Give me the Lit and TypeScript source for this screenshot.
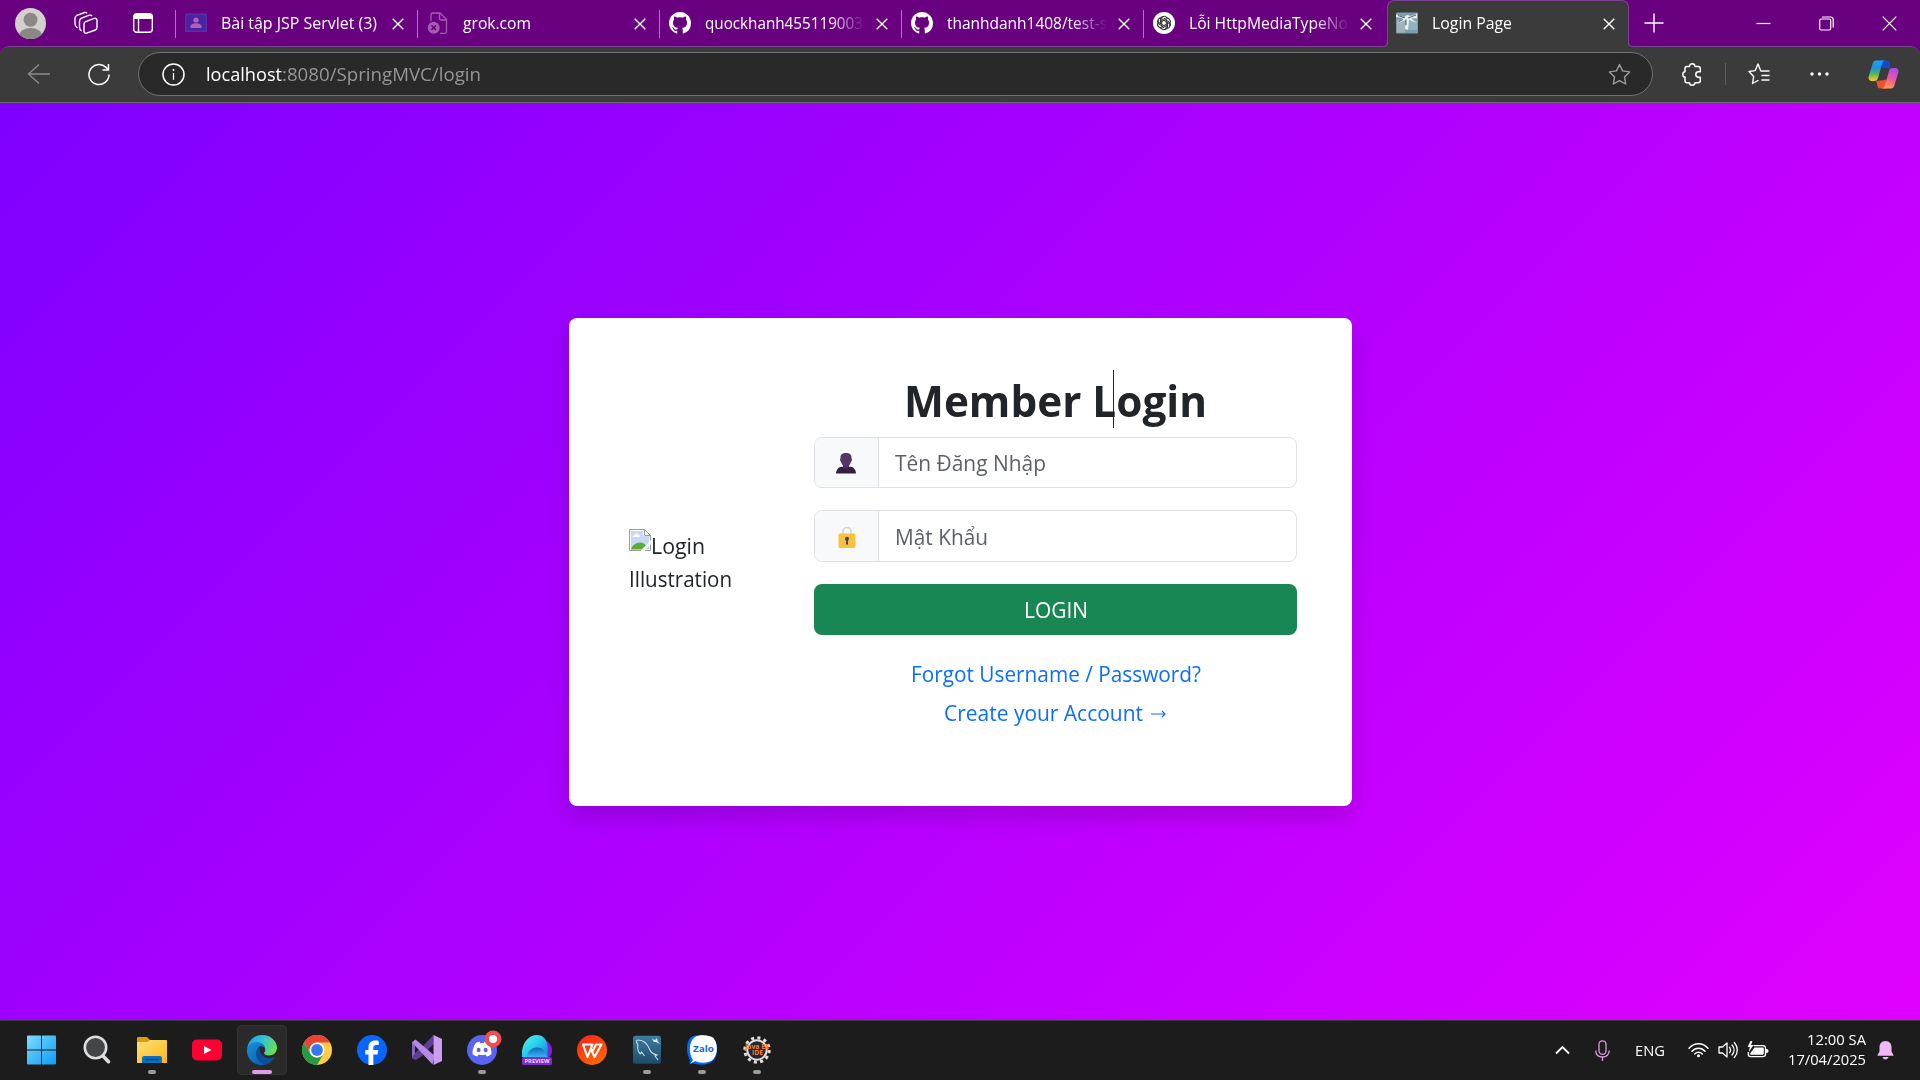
import { LitElement, html, svg, css } from "lit";
import { customElement, property } from "lit/decorators.js";

/** One line of text condensed or widened to an exact advance width. */
@customElement("fit-text")
class FitText extends LitElement {
  @property({ type: Number }) width = 0;

  static styles = css`
    :host { display: inline-block; white-space: pre; }
    .t { display: inline-block; transform-origin: 0 50%; }
  `;

  firstUpdated() {
    const t = this.renderRoot.querySelector(".t") as HTMLElement;
    const natural = t.getBoundingClientRect().width;
    this.style.width = `${this.width}px`;
    if (natural > 0) t.style.transform = `scaleX(${this.width / natural})`;
  }

  render() {
    return html`<span class="t"><slot></slot></span>`;
  }
}

const githubIcon = html`<svg width="22" height="22" viewBox="0 0 16 16"><path fill="#fff" d="M8 0C3.58 0 0 3.58 0 8c0 3.54 2.29 6.53 5.47 7.59.4.07.55-.17.55-.38 0-.19-.01-.82-.01-1.49-2.01.37-2.53-.49-2.69-.94-.09-.23-.48-.94-.82-1.13-.28-.15-.68-.52-.01-.53.63-.01 1.08.58 1.23.82.72 1.21 1.87.87 2.33.66.07-.52.28-.87.51-1.07-1.78-.2-3.64-.89-3.64-3.95 0-.87.31-1.59.82-2.15-.08-.2-.36-1.02.08-2.12 0 0 .67-.21 2.2.82.64-.18 1.32-.27 2-.27s1.36.09 2 .27c1.53-1.04 2.2-.82 2.2-.82.44 1.1.16 1.92.08 2.12.51.56.82 1.27.82 2.15 0 3.07-1.87 3.75-3.65 3.95.29.25.54.73.54 1.48 0 1.07-.01 1.93-.01 2.2 0 .21.15.46.55.38A8.01 8.01 0 0 0 16 8c0-4.42-3.58-8-8-8z"/></svg>`;

const classroomIcon = html`<svg width="22" height="22" viewBox="0 0 22 22"><rect y="1.500" width="22" height="18.500" rx="1" fill="#5431a8"/><rect x="1.500" y="3" width="19" height="15.500" fill="#4b229f"/><circle cx="11" cy="8" r="2.600" fill="#b160b8"/><path d="M5.500 16v-1.800c0-2 3-3 5.500-3s5.500 1 5.500 3V16z" fill="#b160b8"/></svg>`;

const brokenPageIcon = html`<svg width="22" height="22" viewBox="0 0 22 22" fill="none" stroke="#a55cb0" stroke-width="1.300"><path d="M4 9V3.200C4 1.800 4.800 1 6 1h7l6.500 6.500v12c0 1-.6 1.800-1.700 1.800H13M12.500 1v5.500c0 1 .5 1.500 1.500 1.500h5.500"/><circle cx="6.700" cy="15.700" r="6" fill="#a55cb0" stroke="none"/><path d="M4.500 13.500l4.400 4.400M8.900 13.500l-4.400 4.400" stroke="#690080" stroke-width="1.500"/></svg>`;

const gptIcon = html`<svg width="22" height="22" viewBox="0 0 22 22"><circle cx="11" cy="11" r="11" fill="#fff"/><g fill="none" stroke="#222" stroke-width=".95">${[0, 60, 120, 180, 240, 300].map(
  (a) => svg`<path transform="rotate(${a} 11 11)" d="M8.700 12.300V7.200c0-3.200 4.300-4 5.500-1.300M8.700 8.200l3.400-2c1.700-.9 3.600-.2 4.400 1.200"/>`
)}</g></svg>`;

const bowIcon = html`<svg width="22" height="22" viewBox="0 0 22 22"><rect width="22" height="21" y=".5" rx="1" fill="#7d9dad"/><path d="M1 8h8v12.500H1z" fill="#a2b3b8"/><path d="M12 9h9v9h-9z" fill="#91b3c2"/><path d="M0 2.500L8 5l3-2 4 1 6-2.500v5L15 6l6 5-8-3-1 10-3-1 1-9-8 3 5-5-7-1z" fill="#e8f0f2"/><path d="M2 3.500l7 2.500M20 3l-8 3M10 7.500V13M3 9.500l4-2" stroke="#49616d" stroke-width="1" fill="none"/></svg>`;

const closeX = html`<svg width="12" height="12" viewBox="0 0 12 12"><path d="M.7.7l10.600 10.600M11.300.7L.7 11.300" stroke="#fff" stroke-width="1.400"/></svg>`;

interface Tab { title: string; width: number; icon: unknown; faded?: boolean }

const tabs: Tab[] = [
  { title: "Bài tập JSP Servlet (3)", width: 156, icon: classroomIcon },
  { title: "grok.com", width: 68, icon: brokenPageIcon },
  { title: "quockhanh455119003", width: 158, icon: githubIcon, faded: true },
  { title: "thanhdanh1408/test-s", width: 160, icon: githubIcon, faded: true },
  { title: "Lỗi HttpMediaTypeNo", width: 159, icon: gptIcon, faded: true },
];

@customElement("browser-tabs")
class BrowserTabs extends LitElement {
  static styles = css`
    :host { display: flex; height: 46px; background: #690080; color: #fff; font-size: 16px; box-sizing: border-box; }
    svg { display: block; flex: none; }
    .left { width: 176px; flex: none; box-sizing: border-box; display: flex; align-items: center; padding-left: 15px; }
    .space { margin-left: 28px; }
    .pane { margin-left: 35px; }
    .tab { width: 242px; flex: none; box-sizing: border-box; display: flex; align-items: center; padding-left: 9px; position: relative; }
    .tab::before { content: ""; position: absolute; left: -1px; top: 10px; width: 1px; height: 28px; background: #a878b2; }
    .title { width: 159px; flex: none; margin-left: 14px; overflow: hidden; line-height: 30px; height: 30px; }
    .faded { -webkit-mask-image: linear-gradient(90deg, #000 78%, transparent 101%); mask-image: linear-gradient(90deg, #000 78%, transparent 101%); }
    .x { margin-left: 12px; padding-top: 2px; }
    .active { width: 242px; flex: none; height: 47px; margin-left: 1px; box-sizing: border-box; background: #3b3b3b; border: 1px solid #7c4490; border-bottom: 0; border-radius: 7px 7px 0 0; display: flex; align-items: center; padding: 0 0 3px 8px; position: relative; z-index: 1; }
    .active::before, .active::after { content: ""; position: absolute; bottom: 0; width: 5px; height: 5px; border-bottom: 1px solid #7c4490; box-shadow: 0 3px 0 #3b3b3b; }
    .active::before { left: -6px; border-right: 1px solid #7c4490; border-bottom-right-radius: 5px; }
    .active::after { right: -6px; border-left: 1px solid #7c4490; border-bottom-left-radius: 5px; }
    .plus { margin-left: 15px; align-self: center; }
    .controls { margin-left: auto; display: flex; align-items: center; gap: 48px; padding-right: 23px; }
  `;

  render() {
    return html`
      <div class="left">
        <svg width="31" height="31" viewBox="0 0 31 31"><defs><clipPath id="face"><circle cx="15.500" cy="15.500" r="15.500"/></clipPath></defs><g clip-path="url(#face)"><rect width="31" height="31" fill="#d2cfcc"/><circle cx="15.500" cy="11.700" r="7" fill="#8b8784"/><ellipse cx="15.500" cy="28" rx="11.500" ry="8" fill="#8b8784"/></g></svg>
        <svg class="space" width="24" height="24" viewBox="0 0 24 24" fill="none" stroke="#fff" stroke-width="1.400"><path d="M3.500 17C2 16 1 14.500 1 13V7.200C1 5.500 2 4.700 3 4.300L10.500 1.500c1-.3 2 .1 2.500.9"/><path d="M7.500 20C6 19 5.500 17.500 5.500 16v-6c0-1.500 1-2.500 2-2.900l8-2.900c1-.3 2 .2 2.500 1"/><path d="M10 13c0-1.300.6-2 1.700-2.400l8.600-3.200c1.300-.4 2.700.4 2.700 1.700v7.500c0 1.300-.6 2-1.700 2.400l-8.600 3.200c-1.300.4-2.700-.4-2.700-1.700z"/></svg>
        <svg class="pane" width="20" height="20" viewBox="0 0 20 20"><rect x=".7" y=".7" width="18.600" height="18.600" rx="3" fill="none" stroke="#fff" stroke-width="1.400"/><path d="M1 6V3.500C1 2 2 1 3.500 1h13C18 1 19 2 19 3.500V6z" fill="#fff"/><path d="M5.500 6v13" stroke="#fff" stroke-width="1.400"/></svg>
      </div>
      ${tabs.map(
        (t) => html`<div class="tab">${t.icon}<div class="title ${t.faded ? "faded" : ""}"><fit-text width=${t.width}>${t.title}</fit-text></div><div class="x">${closeX}</div></div>`
      )}
      <div class="active">${bowIcon}<div class="title"><fit-text width="80">Login Page</fit-text></div><div class="x">${closeX}</div></div>
      <svg class="plus" width="20" height="20" viewBox="0 0 20 20"><path d="M10 .5v19M.5 10h19" stroke="#fff" stroke-width="1.400"/></svg>
      <div class="controls">
        <svg width="15" height="14" viewBox="0 0 15 14"><path d="M.5 7.500h14" stroke="#fff" stroke-width="1.200"/></svg>
        <svg width="15" height="15" viewBox="0 0 15 15" fill="none" stroke="#fff" stroke-width="1.200"><rect x=".7" y="3" width="11" height="11" rx="1.500"/><path d="M3 1h8.500C13.500 1 14.200 2 14.200 4v7.500"/></svg>
        <svg width="15" height="15" viewBox="0 0 15 15"><path d="M.7.7l13.600 13.600M14.300.7L.7 14.300" stroke="#fff" stroke-width="1.200"/></svg>
      </div>`;
  }
}

@customElement("browser-toolbar")
class BrowserToolbar extends LitElement {
  static styles = css`
    :host { display: flex; align-items: center; height: 57px; box-sizing: border-box; background: #3b3b3b; border-top: 1px solid #7c4490; border-bottom: 1px solid #6b6b6b; padding: 0 0 1px 27px; border-radius: 9px 9px 0 0; }
    svg { display: block; flex: none; }
    .reload { margin-left: 37px; }
    .bar { margin-left: 28px; width: 1515px; height: 44px; box-sizing: border-box; border: 1px solid #717171; border-radius: 22px; background: #292929; display: flex; align-items: center; padding: 0 21px 0 23px; }
    .url { margin-left: 21px; font-size: 18.500px; line-height: 30px; color: #969696; display: flex; flex: 1; padding-bottom: 1px; }
    .host { color: #fff; }
    .puzzle { margin-left: 29px; }
    .rule { width: 1px; height: 22px; background: #5d5d5d; margin: 0 22px 0 23px; }
    .dots { margin-left: 40px; }
    .pilot { margin-left: 39px; }
  `;

  render() {
    return html`
      <svg width="24" height="22" viewBox="0 0 24 22" fill="none" stroke="#8c8c8c" stroke-width="1.300"><path d="M23 11H1.500M12 1.500L1.500 11 12 20.500"/></svg>
      <svg class="reload" width="22" height="23" viewBox="0 0 22 23" fill="none" stroke="#fff" stroke-width="1.500"><path d="M21 11.500a10 10 0 1 1-3-7.100l2 2"/><path d="M20.500 1v6h-6"/></svg>
      <div class="bar">
        <svg width="23" height="23" viewBox="0 0 23 23"><circle cx="11.500" cy="11.500" r="10.500" fill="none" stroke="#fff" stroke-width="1.500"/><path d="M11.500 10v6.800" stroke="#fff" stroke-width="1.300"/><circle cx="11.500" cy="7" r="1" fill="#fff"/></svg>
        <div class="url"><fit-text class="host" width="76">localhost</fit-text><fit-text width="199">:8080/SpringMVC/login</fit-text></div>
        <svg width="23" height="23" viewBox="0 0 23 23" fill="none" stroke="#9d9d9d" stroke-width="1.400" stroke-linejoin="round"><path d="M11.500 1.500l3.100 6.400 7 1-5.100 5 1.200 7.100-6.200-3.400L5.300 21l1.200-7.100-5.100-5 7-1z"/></svg>
      </div>
      <svg class="puzzle" width="20" height="23" viewBox="0 0 20 23" fill="none" stroke="#fff" stroke-width="1.500" stroke-linejoin="round"><path d="M3 5.500c0-1.200.7-2 2-2h2.500c0-1.600 1-2.700 2.700-2.700s2.700 1.100 2.700 2.700H16c1.500 0 2.300.8 2.300 2v3.300h-1.800c-1.600 0-2.700 1-2.700 2.700s1.100 2.700 2.700 2.700h1.800v3.500c0 1.300-.8 2-2.300 2h-3.100c0 1.600-1.100 2.500-2.700 2.500s-2.700-1-2.700-2.500H5c-1.300 0-2-.7-2-2v-3.600C1.500 14.100.8 13 .8 11.500S1.600 9 3 8.800z"/></svg>
      <div class="rule"></div>
      <svg width="22" height="22" viewBox="0 0 22 22" fill="none" stroke="#fff" stroke-width="1.400" stroke-linejoin="round" stroke-linecap="round"><path d="M14.500 8h-1.700L10 1 7.200 7.600 1 8.500l4.700 5L4.500 20.500 10 17.500M13.500 8H21M14 12.500h7M14 17h7"/></svg>
      <svg class="dots" width="19" height="6" viewBox="0 0 19 6" fill="#fff"><circle cx="2" cy="3" r="1.700"/><circle cx="9.500" cy="3" r="1.700"/><circle cx="17" cy="3" r="1.700"/></svg>
      <svg class="pilot" width="31" height="29" viewBox="0 0 31 29"><defs>
        <linearGradient id="p1" x1="0" y1="0" x2="0" y2="1"><stop offset="0" stop-color="#19a7f2"/><stop offset=".35" stop-color="#1b91e2"/><stop offset=".65" stop-color="#53b563"/><stop offset="1" stop-color="#ffd01c"/></linearGradient>
        <linearGradient id="p2" x1=".6" y1="0" x2=".3" y2="1"><stop offset="0" stop-color="#a84cf2"/><stop offset=".5" stop-color="#f0569b"/><stop offset="1" stop-color="#ffa44a"/></linearGradient></defs>
        <path d="M12 .5h6.500c2 0 2.700 1.200 3.200 3L22.700 8h-4.500l-4.500-.5z" fill="#1648cc"/>
        <path d="M19 28.500h-6.500c-2 0-2.700-1.200-3.200-3L8.300 21l5-.5 5-1z" fill="#f0502e"/>
        <path d="M8 .5h9.500c-2 0-2.900 1.300-3.500 3.500l-3.800 13.500C9.500 20 8.500 21 6 21H4C1 21 0 18.500.8 16L4.500 4C5.200 1.800 6 .5 8 .5z" fill="url(#p1)"/>
        <path d="M23 28.500h-9.500c2 0 2.900-1.300 3.500-3.500l3.800-13.500C21.500 9 22.500 8 25 8h2c3 0 4 2.500 3.200 5L26.500 25c-.7 2.200-1.500 3.500-3.500 3.500z" fill="url(#p2)"/></svg>`;
  }
}

@customElement("login-card")
class LoginCard extends LitElement {
  static styles = css`
    :host { display: flex; width: 783px; height: 488px; box-sizing: border-box; background: #fff; border-radius: 8px; box-shadow: 0 11px 22px rgba(0, 0, 0, 0.15); color: #212529; font-size: 21.300px; padding: 52px 55px 0 60px; }
    svg { display: block; }
    .art { width: 185px; padding-top: 159px; line-height: 33px; }
    .alt { display: flex; height: 33px; }
    .alt svg { flex: none; }
    .form { width: 483px; display: flex; flex-direction: column; align-items: center; }
    h2 { margin: 0; height: 67px; line-height: 61px; font-size: 43px; font-weight: 700; position: relative; }
    .caret { position: absolute; left: 209px; top: 0; width: 1px; height: 58px; background: #222; }
    .group { display: flex; width: 483px; height: 51px; box-sizing: border-box; border: 1px solid #dee2e6; border-radius: 8px; overflow: hidden; margin-bottom: 22px; }
    .tall { height: 52px; }
    .addon { width: 63px; border-right: 1px solid #dee2e6; background: #f8f9fa; display: flex; align-items: center; justify-content: center; }
    .tall .addon { padding: 2px 0 0 1px; width: 62px; }
    .hint { padding-left: 16px; line-height: 50px; color: #5c6167; }
    .tall .hint { line-height: 52px; }
    .button { width: 483px; height: 51px; border-radius: 8px; background: #198754; color: #fff; text-align: center; line-height: 51px; box-sizing: border-box; padding-left: 2px; }
    .link { height: 39px; line-height: 39px; color: #0d6efd; display: flex; }
    .first { margin: 19px 0 0 1px; }
    .arrow { margin-left: 8px; margin-top: 17px; }
  `;

  render() {
    return html`
      <div class="art">
        <div class="alt">
          <svg width="22" height="22" viewBox="0 0 22 22"><path d="M.5.500h15l6 6v15H.5z" fill="#c7d7f5" stroke="#9b9b9b"/><path d="M1.500 1.500h13v5h6v14h-19z" fill="none" stroke="#fff"/><path d="M15.500.500v6h6z" fill="#fff" stroke="#9b9b9b"/><path d="M3.500 8c0-1.500 2-1.500 2.300-2.200C7 3.500 9.500 4.500 9.500 6c1.500 0 1.500 2 .5 2z" fill="#fff"/><path d="M2 20.500c1-4 5-7 9-7 2.500 0 4.500 1 6 3l-4 4z" fill="#5aad35"/><path d="M22.500 10.500v4L16 20.500v2h-5z" fill="#fff"/></svg>
          <fit-text width="54">Login</fit-text>
        </div>
        <fit-text width="103">Illustration</fit-text>
      </div>
      <div class="form">
        <h2><fit-text width="303">Member Login</fit-text><span class="caret"></span></h2>
        <div class="group">
          <div class="addon"><svg width="20" height="22" viewBox="0 0 20 22"><path d="M0 21.500c.3-4 2.500-6.500 5.500-6.700h9c3 .2 5.200 2.700 5.500 6.700z" fill="#321f42"/><path d="M7 12h6v3.500L10 17l-3-1.500z" fill="#4b2d5d"/><path d="M10 1c3.700 0 5.700 1.300 5.500 5.500.8.300.6 2.700-.4 3-.6 3-2.600 5-5.100 5s-4.500-2-5.100-5c-1-.3-1.200-2.700-.4-3C4.300 2.300 6.300 1 10 1z" fill="#533566"/></svg></div>
          <div class="hint"><fit-text width="151">Tên Đăng Nhập</fit-text></div>
        </div>
        <div class="group tall">
          <div class="addon"><svg width="18" height="22" viewBox="0 0 18 22"><path d="M5 8.500V5.500a4 4 0 0 1 8 0v3" fill="none" stroke="#d3d3d3" stroke-width="1.700"/><rect x=".5" y="7.500" width="17" height="14.500" rx="1.500" fill="#f9c23c"/><circle cx="9" cy="12.800" r="2" fill="#433b6b"/><path d="M8.200 13h1.600l.2 5.500H8z" fill="#433b6b"/></svg></div>
          <div class="hint"><fit-text width="93">Mật Khẩu</fit-text></div>
        </div>
        <div class="button"><fit-text width="64">LOGIN</fit-text></div>
        <div class="link first"><fit-text width="290">Forgot Username / Password?</fit-text></div>
        <div class="link"><fit-text width="199">Create your Account</fit-text><svg class="arrow" width="15" height="8" viewBox="0 0 15 8" fill="none" stroke="#0d6efd" stroke-width="1.200"><path d="M0 4h14M11 1l3 3-3 3"/></svg></div>
      </div>`;
  }
}

interface App { icon: unknown; mark?: "idle" | "active" }

const apps: App[] = [
  { icon: html`<svg width="30" height="30" viewBox="1 0 30 30"><defs><linearGradient id="w" x1="0" y1="0" x2="1" y2="1"><stop offset="0" stop-color="#7fdcff"/><stop offset=".5" stop-color="#41bcf9"/><stop offset="1" stop-color="#119bf5"/></linearGradient></defs><path fill="url(#w)" d="M2 .5H15V14.500H1V1.500Q1 .5 2 .5zM16 .5h13q1 0 1 1v13H16zM1 15.500H15v14H2q-1 0-1-1zM16 15.500h14v13q0 1-1 1H16z"/></svg>` },
  { icon: html`<svg width="30" height="30" viewBox="0 0 30 30"><circle cx="13.500" cy="12.500" r="10.700" fill="#444546" stroke="#dcdee0" stroke-width="2.600"/><path d="M21 21l5.500 5.700" stroke="#dcdee0" stroke-width="3.600" stroke-linecap="round"/></svg>` },
  { mark: "idle", icon: html`<svg width="30" height="30" viewBox="0 0 30 30"><defs><linearGradient id="f" x1="0" y1="0" x2="1" y2="1"><stop offset="0" stop-color="#ffe07a"/><stop offset="1" stop-color="#fcb813"/></linearGradient></defs><path d="M0 3q0-1 1-1h9l3 3h5v5H0z" fill="#dd9b08"/><path d="M0 7h10l3-2h16q1 0 1 1v22H0z" fill="url(#f)"/><path d="M5 28v-5q0-2 2-2h16q2 0 2 2v5z" fill="#0c6fc2"/><path d="M8.500 24.500h13" stroke="#064c8b" stroke-width="1.300" stroke-linecap="round"/></svg>` },
  { icon: html`<svg width="30" height="30" viewBox="0 0 30 30"><rect y="4.500" width="30" height="21" rx="5" fill="#ff0033"/><path d="M12 11l7.500 4-7.500 4z" fill="#fff"/></svg>` },
  { mark: "active", icon: html`<svg width="30" height="30" viewBox="0 0 30 30"><defs>
    <linearGradient id="e1" x1="0" y1=".3" x2="1" y2=".6"><stop offset="0" stop-color="#1e9ee6"/><stop offset=".45" stop-color="#30c3d8"/><stop offset="1" stop-color="#6ce04b"/></linearGradient>
    <linearGradient id="e2" x1="0" y1="0" x2="1" y2="1"><stop offset="0" stop-color="#1593e0"/><stop offset="1" stop-color="#0a4d9a"/></linearGradient></defs>
    <path d="M.3 13C1.500 5 7.500 0 15 0c9 0 15 6.500 15 12.500 0 5-3.500 8-8 8-4 0-5.500-1.700-4.700-3 2.700-4-.5-8.500-5.300-8.500C7 9 2 10 .3 13z" fill="url(#e1)"/>
    <path d="M0 15C.5 9.500 5 6.500 10 7c5 .4 8 3 8.200 6.500-1.500-2-3.700-2.700-5.500-2C8 14 9 24 17 25.500c4 .7 8-.5 10.500-3.500C25 27 20.500 30 15 30 6 30-.5 23 0 15z" fill="url(#e2)"/>
    <path d="M12.500 11.700C6 16 9 27.500 18 29.500c4-1 7.500-3.700 9.800-7.500-8 4-16-1.500-15.300-10.300z" fill="#0b4f9b"/></svg>` },
  { icon: html`<svg width="30" height="30" viewBox="0 0 30 30"><circle cx="15" cy="15" r="15" fill="#ffcd40"/><path d="M2 7.500A15 15 0 0 1 28 7.500H15a7.500 7.500 0 0 0-6.500 11z" fill="#ea4335"/><path d="M2 7.500A15 15 0 0 0 15 30l6.500-11.200a7.500 7.500 0 0 1-13 0z" fill="#269848"/><circle cx="15" cy="15" r="7.500" fill="#fff"/><circle cx="15" cy="15" r="5.900" fill="#3679ee"/></svg>` },
  { icon: html`<svg width="30" height="30" viewBox="0 0 30 30"><circle cx="15" cy="15" r="15" fill="#0866ff"/><path d="M11.500 30V19.500H8.300V15h3.200v-2.200C11.500 7.800 14 5.500 18.500 5.500c1.500 0 2.500.2 3.200.4V10c-.8-.1-1.500-.1-2.200-.1-2.300 0-3.200.9-3.200 3V15h5l-.8 4.500h-4.200V30z" fill="#fff"/></svg>` },
  { icon: html`<svg width="30" height="30" viewBox="0 0 30 30"><path d="M0 7.500L3 5v19.500L0 23z" fill="#8a63bd"/><path d="M21.500 0L11 11 4.500 16.500 0 22.500 4 25l6-4L21.500 9z" fill="#5f3f92"/><path d="M3.500 4.500L0 7.500 20.500 29.500l2-9z" fill="#b58ae6"/><path d="M21.500 0L30 4v22l-8.500 4z" fill="#cb9cf1"/></svg>` },
  { mark: "idle", icon: html`<svg class="over" width="40" height="40" viewBox="0 -8 40 40"><circle cx="15" cy="15" r="15" fill="#5865f2"/><path d="M9 7.700c2-.8 3-.9 3.700-1l.7 1.500c1.100-.2 2.200-.2 3.300 0l.7-1.500c1.300.1 2.400.4 3.700 1 2.500 3.700 3.600 7.500 3.300 11.500-1.700 1.300-3.300 1.900-4.600 2.200l-1.200-2c-2.400.8-4.800.8-7.200 0l-1.200 2c-1.500-.4-3-1-4.600-2.200C5.200 14.900 6.500 11 9 7.700z" fill="#fff"/><ellipse cx="11.600" cy="15" rx="2" ry="2.200" fill="#5865f2"/><ellipse cx="18.600" cy="15" rx="2" ry="2.200" fill="#5865f2"/><circle cx="26" cy="4" r="8.500" fill="#e9504f"/><circle cx="26" cy="4" r="4" fill="#fff"/></svg>` },
  { icon: html`<svg width="30" height="30" viewBox="0 0 30 30"><defs><linearGradient id="c" x1="0" y1="0" x2="1" y2="1"><stop offset="0" stop-color="#5df5ee"/><stop offset=".5" stop-color="#25cdea"/><stop offset="1" stop-color="#1583de"/></linearGradient><linearGradient id="c2" x1="0" y1="0" x2="0" y2="1"><stop offset="0" stop-color="#1467bd"/><stop offset="1" stop-color="#35b5f2"/></linearGradient></defs><path d="M20 5c6 0 10 5 10 10 0 4-2 8-6 8h-8z" fill="#8320da"/><path d="M0 22V16C1 7 7 0 15 0c6 0 10 4 10.500 12v10z" fill="url(#c)"/><path d="M5 22c0-5 4-9.500 10-9.500 5 0 8.500 3 10.500 9.500z" fill="url(#c2)"/><rect y="22" width="30" height="8" rx="1.500" fill="#7a2dc9"/><text x="15" y="28.200" font-size="5.200" font-weight="700" fill="#f0dcff" text-anchor="middle" textLength="25" lengthAdjust="spacingAndGlyphs">PREVIEW</text></svg>` },
  { icon: html`<svg width="30" height="30" viewBox="0 0 30 30"><defs><linearGradient id="o" x1="0" y1="0" x2=".6" y2="1"><stop offset="0" stop-color="#f7201c"/><stop offset="1" stop-color="#ff6500"/></linearGradient></defs><circle cx="15" cy="15" r="15" fill="url(#o)"/><path d="M15.500 9.500H6L10.500 22l5-12.500M14 14l3.500 8L24.500 9.500h-5.500l-3 6" fill="none" stroke="#fff" stroke-width="2.100" stroke-linejoin="round" stroke-linecap="round"/></svg>` },
  { mark: "idle", icon: html`<svg width="30" height="30" viewBox="0 0 30 30"><defs><linearGradient id="m" x1="0" y1="0" x2="0" y2="1"><stop offset="0" stop-color="#3f7da2"/><stop offset="1" stop-color="#1d4b69"/></linearGradient></defs><rect x="1" y=".7" width="28" height="28" rx="2.500" fill="url(#m)"/><path d="M8.500 19C6 17 5 13 6 10 4 7 4 5 6 5c6 0 10 5 12 10 1 3 3 4 7 5l-2 1 3 4M8.500 19l1-2 3 4" fill="none" stroke="#cfe0e8" stroke-width="1.100"/><path d="M20 4l3 1 2-2 .5 3 2.500 3-4-2-2 0z" fill="#e6f0f4"/></svg>` },
  { mark: "idle", icon: html`<svg width="30" height="30" viewBox="0 0 30 30"><path d="M2 23C-1 17-1 5 5 1.500 9-.5 20-1 26 3c6 6 5 18 0 23-6 5-16 4-20 2l-4 1.500c1.500-2 1-5 0-6.500z" fill="#0068ff"/><path d="M6 25C2 20 1 7 8 2c4-2.500 14-2.500 18.500 1C31 8 31 19 26.500 24c-4 4.500-14 4.500-18 2l-5 2.500z" fill="#fff"/><text x="16.500" y="17.300" font-size="9.500" font-weight="700" fill="#1267e5" text-anchor="middle" textLength="21" lengthAdjust="spacingAndGlyphs">Zalo</text></svg>` },
  { mark: "idle", icon: html`<svg width="30" height="30" viewBox="0 0 30 30"><circle cx="15" cy="15" r="9.700" fill="#282334" stroke="#dedede" stroke-width="2"/><circle cx="15" cy="15" r="12.200" fill="none" stroke="#dedede" stroke-width="3" stroke-dasharray="3.100 3.288"/><g fill="#ef8429" font-weight="700" text-anchor="middle" font-size="6.500"><text x="15" y="14.300" textLength="24" lengthAdjust="spacingAndGlyphs">Java EE</text><text x="15.500" y="20.300" textLength="11" lengthAdjust="spacingAndGlyphs">IDE</text></g></svg>` },
];

@customElement("task-bar")
class TaskBar extends LitElement {
  static styles = css`
    :host { display: flex; height: 60px; box-sizing: border-box; border-top: 1px solid #3b3b3b; background: #1c1c1c; color: #fff; padding-left: 17px; }
    svg { display: block; flex: none; font-family: "Open Sans", sans-serif; }
    .app { width: 50px; height: 50px; margin: 4px 5px 0 0; box-sizing: border-box; display: flex; justify-content: center; padding-top: 10px; position: relative; border-radius: 5px; }
    .app.active { background: #2a2a2a; box-shadow: inset 0 0 0 1px #323232; }
    .app::after { position: absolute; bottom: 1px; height: 4px; border-radius: 2px; }
    .app.idle::after { content: ""; width: 8px; background: #9a9a9a; }
    .app.active::after { content: ""; width: 20px; background: #dd9fe6; }
    .over { margin: -8px 0 0 10px; }
    .tray { margin-left: auto; display: flex; align-items: center; height: 58px; padding-right: 26px; font-size: 14.700px; }
    .mic { margin-left: 25px; }
    .lang { margin-left: 25px; line-height: 20px; }
    .wifi { margin-left: 23px; }
    .vol { margin-left: 9px; }
    .bat { margin-left: 9px; }
    .clock { margin-left: 19px; display: flex; flex-direction: column; align-items: flex-end; line-height: 20px; padding-bottom: 2px; }
    .bell { margin-left: 11px; }
  `;

  render() {
    return html`
      ${apps.map((a) => html`<div class="app ${a.mark ?? ""}">${a.icon}</div>`)}
      <div class="tray">
        <svg width="15" height="10" viewBox="0 0 15 10"><path d="M1 8.500l6.500-6.500L14 8.500" fill="none" stroke="#fff" stroke-width="1.800"/></svg>
        <svg class="mic" width="15" height="21" viewBox="0 0 15 21" fill="none" stroke="#d99be0" stroke-width="1.300"><rect x="4" y=".8" width="7" height="13.500" rx="3.500"/><path d="M.8 10.500c0 4 2.500 6.500 6.700 6.500s6.700-2.500 6.700-6.500M7.500 17v4"/></svg>
        <fit-text class="lang" width="30">ENG</fit-text>
        <svg class="wifi" width="21" height="16" viewBox="0 0 21 16" fill="none" stroke="#fff" stroke-width="1.500" stroke-linecap="round"><path d="M1 6.200c5.200-6 13.800-6 19 0M4 9.300c3.500-4.200 9.500-4.200 13 0M6.800 12c2-2.300 5.400-2.300 7.400 0"/><circle cx="10.500" cy="13.800" r="1.500" fill="#fff" stroke="none"/></svg>
        <svg class="vol" width="20" height="18" viewBox="0 0 20 18" fill="none" stroke="#fff" stroke-width="1.300" stroke-linecap="round" stroke-linejoin="round"><path d="M1 6h3.500L9 2v14l-4.500-4H1zM11.500 6.300c1.400 1.700 1.400 3.700 0 5.400M14 4c2.700 3 2.700 7 0 10M16.300 1.500c4 4.500 4 10.500 0 15"/></svg>
        <svg class="bat" width="22" height="18" viewBox="0 0 22 18"><path d="M6.500 4.700H16c1.600 0 2.500.9 2.500 2.300v6c0 1.700-.9 2.600-2.500 2.600H3.500C2 15.600 1.300 14.700 1.300 13v-2" fill="none" stroke="#fff" stroke-width="1.300"/><path d="M7.500 6.500h8c.9 0 1.300.5 1.300 1.300v4.500c0 .9-.5 1.400-1.300 1.400H4.300c-.8 0-1.200-.5-1.200-1.300z" fill="#fff"/><path d="M19 8c2 0 2.500.7 2.500 2s-.5 2-2.500 2z" fill="#fff"/><path d="M3.500 0L.5 6h2.300l-1 5L6.500 4H4l1.500-4z" fill="#fff"/></svg>
        <div class="clock"><fit-text width="59">12:00 SA</fit-text><fit-text width="78">17/04/2025</fit-text></div>
        <svg class="bell" width="17" height="20" viewBox="0 0 17 20"><path d="M8.500 1c4 0 6 3 6 6v4.500l2 3.500v.8H.5V15l2-3.500V7c0-3 2-6 6-6z" fill="#efb9f5"/><path d="M5.500 17h6c-.4 1.600-1.500 2.400-3 2.400s-2.600-.8-3-2.400z" fill="#efb9f5"/></svg>
      </div>`;
  }
}

@customElement("app-root")
class AppRoot extends LitElement {
  static styles = css`
    :host { display: flex; flex-direction: column; width: 1920px; height: 1080px; overflow: hidden; background: #690080; font-family: "Open Sans", "Noto Sans", sans-serif; }
    .page { flex: 1; display: flex; align-items: flex-start; justify-content: center; padding-top: 215px; background: linear-gradient(135deg, #7f00ff, #e100ff); }
  `;

  render() {
    return html`
      <browser-tabs></browser-tabs>
      <browser-toolbar></browser-toolbar>
      <main class="page"><login-card></login-card></main>
      <task-bar></task-bar>`;
  }
}
